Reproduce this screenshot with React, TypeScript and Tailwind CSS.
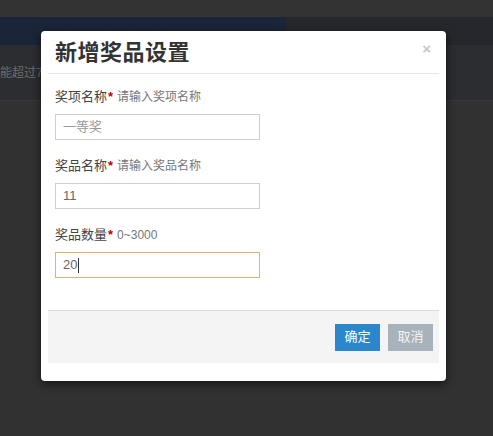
import React from "react";

const FONT = { fontFamily: '"Liberation Sans", "Noto Sans CJK SC", sans-serif' };

function Field({ label, hint, value, placeholder, focused }: { label: string; hint: string; value?: string; placeholder?: string; focused?: boolean }) {
  return (
    <div className="flex flex-col">
      <div className="flex items-center h-[18px] text-[13px] text-[#444]">
        <span>{label}</span>
        <span className="text-[#b00] ml-[1px] text-[13px] font-bold">*</span>
        <span className="ml-[4px] text-[12px] text-[#777]">{hint}</span>
      </div>
      <div
        className={
          "mt-[8px] w-[205px] h-[26px] flex items-center px-[7px] text-[13px] border " +
          (focused ? "border-[#e0b36e]" : "border-[#cfcfcf]")
        }
      >
        {value ? (
          <span className="text-[#666]">
            {value}
            {focused && <span className="inline-block w-px h-[15px] bg-[#333] align-middle ml-[1px]" />}
          </span>
        ) : (
          <span className="text-[#999]">{placeholder}</span>
        )}
      </div>
    </div>
  );
}

export default function App() {
  return (
    <div className="relative w-[493px] h-[436px] overflow-hidden bg-[#313131]" style={FONT}>
      {/* dimmed page behind */}
      <div className="flex flex-col h-full">
        <div className="h-[17px] bg-[#333333]" />
        <div className="h-[28px] flex">
          <div className="w-[285px] bg-[#1a2538]" />
          <div className="flex-1 bg-[#25272c]" />
        </div>
        <div className="h-[55px] bg-[#2c2d30] flex items-center">
          <span className="text-[12px] text-[#6d6d6d]">能超过7</span>
        </div>
        <div className="h-px bg-[#383838]" />
        <div className="flex-1 bg-[#313131]" />
      </div>

      {/* modal */}
      <div className="absolute left-[41px] top-[31px] w-[405px] h-[350px] bg-white rounded-[4px] shadow-[0_3px_10px_rgba(0,0,0,0.6)] flex flex-col">
        <div className="h-[43px] flex items-center justify-between pl-[7px] pr-[8px] mx-[7px] border-b border-[#e5e5e5]">
          <span className="text-[22px] font-bold text-[#333] tracking-[0.5px]">新增奖品设置</span>
          <span className="text-[15px] text-[#c8c8c8] font-bold -mt-[6px]">×</span>
        </div>
        <div className="flex-1 flex flex-col gap-[17px] pl-[14px] pt-[14px]">
          <Field label="奖项名称" hint="请输入奖项名称" placeholder="一等奖" />
          <Field label="奖品名称" hint="请输入奖品名称" value="11" />
          <Field label="奖品数量" hint="0~3000" value="20" focused />
        </div>
        <div className="mx-[7px] h-[53px] bg-[#f4f4f4] border-t border-[#dcdcdc] flex items-center justify-end gap-[8px] pr-[6px]">
          <button className="w-[45px] h-[27px] bg-[#2b86cb] text-white text-[13px]">确定</button>
          <button className="w-[45px] h-[27px] bg-[#a7b2bb] text-[#f4f4f4] text-[13px]">取消</button>
        </div>
        <div className="h-[18px]" />
      </div>
    </div>
  );
}
